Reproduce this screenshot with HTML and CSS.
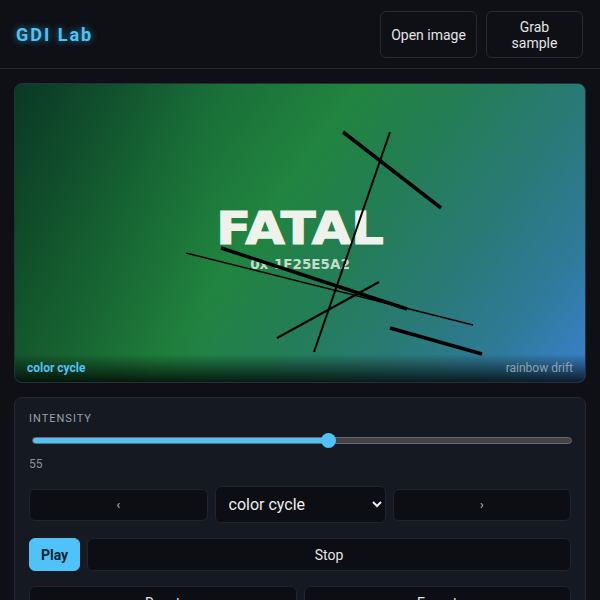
FILE: index.html
```html
<!DOCTYPE html>
<html lang="en">
<head>
<meta charset="utf-8">
<title>GDI Lab</title>
<link rel="stylesheet" href="styles.css">
</head>
<body>
<header class="topbar">
  <div class="logo">GDI Lab</div>
  <div class="top-actions">
    <button class="btn btn-top">Open image</button>
    <button class="btn btn-top">Grab sample</button>
  </div>
</header>
<main class="main">
  <section class="stage">
    <div class="stage-text">
      <div class="fatal">FATAL</div>
      <div class="code">0x-1F25E5A2</div>
    </div>
    <svg class="scribbles" viewBox="0 0 572 300" width="572" height="300" aria-hidden="true">
      <g stroke="#000" stroke-linecap="butt" fill="none">
        <line x1="329" y1="49" x2="427" y2="125" stroke-width="3.5"/>
        <line x1="376" y1="49" x2="300" y2="269" stroke-width="2"/>
        <line x1="207" y1="165" x2="393" y2="226" stroke-width="3.5"/>
        <line x1="172" y1="170" x2="459" y2="242" stroke-width="1.5"/>
        <line x1="365" y1="199" x2="263" y2="255" stroke-width="2"/>
        <line x1="376" y1="245" x2="468" y2="271" stroke-width="3.5"/>
      </g>
    </svg>
    <div class="caption">
      <span class="caption-mode">color cycle</span>
      <span class="caption-preset">rainbow drift</span>
    </div>
  </section>
  <section class="panel">
    <div class="label">INTENSITY</div>
    <input class="range" type="range" min="0" max="100" value="55">
    <div class="value">55</div>
    <div class="row row-mode">
      <button class="btn btn-sm">‹</button>
      <select class="select">
        <option>color cycle</option>
        <option>rainbow drift</option>
      </select>
      <button class="btn btn-sm">›</button>
    </div>
    <div class="row row-play">
      <button class="btn btn-primary">Play</button>
      <button class="btn btn-wide">Stop</button>
    </div>
    <div class="row row-half">
      <button class="btn btn-wide">Reset</button>
      <button class="btn btn-wide">Export</button>
    </div>
  </section>
</main>
</body>
</html>
```
FILE: styles.css
```css
* { box-sizing: border-box; }
html, body {
  margin: 0;
  background: #0e1016;
  color: #e6e6e6;
  font-family: Roboto, "Noto Sans", "Liberation Sans", sans-serif;
}
.topbar {
  height: 69px;
  padding: 0 17px;
  display: flex;
  align-items: center;
  justify-content: space-between;
  border-bottom: 1px solid #23283a;
}
.logo {
  font-size: 18px;
  font-weight: 700;
  letter-spacing: 2px;
  color: #4fc3f7;
  text-shadow: 0 0 7px rgba(79, 195, 247, 0.65);
  margin-left: -1px;
}
.top-actions {
  display: flex;
  gap: 9px;
  margin-top: 1px;
}
.btn {
  font-family: Roboto, "Noto Sans", "Liberation Sans", sans-serif;
  font-size: 14px;
  color: #e4e4e4;
  background: #0c0e13;
  border: 1px solid #1f2430;
  border-radius: 6px;
  cursor: pointer;
  padding: 0 10px;
}
.btn-top {
  width: 97px;
  height: 47px;
  background: #0e1016;
  border-color: #262b37;
  line-height: 16px;
}
.main {
  padding: 14px;
  display: flex;
  flex-direction: column;
  gap: 14px;
}
.stage {
  position: relative;
  height: 300px;
  border: 1px solid #26303c;
  border-radius: 8px;
  overflow: hidden;
  display: flex;
  flex-direction: column;
  background:
    linear-gradient(90deg, rgba(0, 0, 0, 0.2), rgba(0, 0, 0, 0) 35%),
    linear-gradient(126deg, #0d462e 0%, #186c37 24%, #21843f 44%, #237d55 58%, #297a74 72%, #2e7a98 86%, #3b80cf 100%);
}
.stage-text {
  padding-top: 123px;
  text-align: center;
  font-family: "DejaVu Sans", "Liberation Sans", sans-serif;
  font-weight: 700;
}
.fatal {
  font-size: 44px;
  line-height: 44px;
  color: #eef2ea;
  -webkit-text-stroke: 1.2px #eef2ea;
  transform: scaleX(1.16);
}
.code {
  margin-top: 6px;
  font-size: 13.5px;
  line-height: 14px;
  color: rgba(222, 232, 222, 0.9);
}
.scribbles {
  position: absolute;
  left: -1px;
  top: -1px;
}
.caption {
  margin-top: auto;
  height: 28px;
  padding: 0 12px;
  display: flex;
  align-items: center;
  justify-content: space-between;
  font-size: 12px;
  background: linear-gradient(to bottom, rgba(0, 0, 0, 0), rgba(0, 0, 0, 0.78));
}
.caption-mode {
  font-weight: 700;
  color: #4fc3f7;
}
.caption-preset {
  color: #8fa1aa;
}
.panel {
  background: #151922;
  border: 1px solid #232836;
  border-radius: 8px;
  padding: 14px 14px 20px;
  display: flex;
  flex-direction: column;
}
.label {
  font-size: 11px;
  line-height: 13px;
  letter-spacing: 1px;
  color: #9aa1ab;
}
.range {
  -webkit-appearance: none;
  appearance: none;
  margin: 12px 0 0 3px;
  width: 540px;
  height: 7px;
  border-radius: 4px;
  border: 1px solid #6a6a6e;
  background: linear-gradient(to right, #4fc3f7 55%, #444448 55%);
  outline: none;
}
.range::-webkit-slider-thumb {
  -webkit-appearance: none;
  appearance: none;
  width: 15px;
  height: 15px;
  border-radius: 50%;
  background: #4fc3f7;
  border: none;
}
.value {
  margin-top: 13px;
  font-size: 12px;
  line-height: 14px;
  color: #8b919b;
}
.row {
  display: grid;
  gap: 7px;
  margin-top: 15px;
}
.row-mode {
  grid-template-columns: 1fr 171px 1fr;
  align-items: center;
}
.btn-sm {
  height: 32px;
  font-size: 12px;
  color: #c8cad0;
}
.select {
  height: 37px;
  font-family: Roboto, "Noto Sans", "Liberation Sans", sans-serif;
  font-size: 16px;
  color: #ececec;
  background: #0c0e13;
  border: 1px solid #1f2430;
  border-radius: 6px;
  padding: 0 6px 0 9px;
  color-scheme: dark;
}
.row-play {
  grid-template-columns: 51px 1fr;
}
.btn-primary {
  height: 33px;
  background: #4fc3f7;
  border-color: #4fc3f7;
  color: #0b2431;
  font-weight: 700;
  padding: 0;
}
.btn-wide {
  height: 33px;
}
.row-half {
  grid-template-columns: 1fr 1fr;
}
```
